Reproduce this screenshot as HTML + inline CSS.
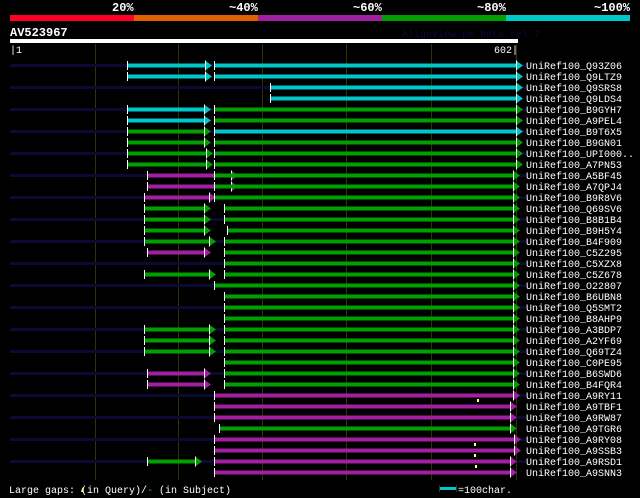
<!DOCTYPE html>
<html><head><meta charset="utf-8"><style>
html,body{margin:0;padding:0;background:#000;width:640px;height:498px;overflow:hidden}
svg{display:block}
text{font-family:"Liberation Mono","DejaVu Sans Mono",monospace;fill:#fff}
</style></head><body>
<svg id="s" width="640" height="498" xmlns="http://www.w3.org/2000/svg">
<rect width="640" height="498" fill="#000"/>
<g font-weight="bold" font-size="12">
<text x="112" y="11">20%</text>
<text x="229" y="11">~40%</text>
<text x="353" y="11">~60%</text>
<text x="477" y="11">~80%</text>
<text x="594" y="11">~100%</text>
</g>
<rect x="10" y="15" width="124" height="6" fill="#ff0022"/>
<rect x="134" y="15" width="124" height="6" fill="#e06000"/>
<rect x="258" y="15" width="124" height="6" fill="#a020a0"/>
<rect x="382" y="15" width="124" height="6" fill="#00a000"/>
<rect x="506" y="15" width="124" height="6" fill="#00c8c8"/>
<text x="10" y="36" font-weight="bold" font-size="12">AV523967</text>
<text x="402" y="37" font-size="10" style="fill:#0a0a40">AlignView.pm Beta rel.7</text>
<rect x="10" y="39" width="508" height="4" fill="#fff"/>
<g id="grid"></g>
<text x="10" y="53" font-size="10">|1</text>
<text x="518" y="53" font-size="10" text-anchor="end">602|</text>
<g id="rows"></g>
<g font-size="10" transform="translate(0,1)">
<text x="526" y="68">UniRef100_Q93Z06</text>
<text x="526" y="79">UniRef100_Q9LTZ9</text>
<text x="526" y="90">UniRef100_Q9SRS8</text>
<text x="526" y="101">UniRef100_Q9LDS4</text>
<text x="526" y="112">UniRef100_B9GYH7</text>
<text x="526" y="123">UniRef100_A9PEL4</text>
<text x="526" y="134">UniRef100_B9T6X5</text>
<text x="526" y="145">UniRef100_B9GN01</text>
<text x="526" y="156">UniRef100_UPI000..</text>
<text x="526" y="167">UniRef100_A7PN53</text>
<text x="526" y="178">UniRef100_A5BF45</text>
<text x="526" y="189">UniRef100_A7QPJ4</text>
<text x="526" y="200">UniRef100_B9R8V6</text>
<text x="526" y="211">UniRef100_Q69SV6</text>
<text x="526" y="222">UniRef100_B8B1B4</text>
<text x="526" y="233">UniRef100_B9H5Y4</text>
<text x="526" y="244">UniRef100_B4F909</text>
<text x="526" y="255">UniRef100_C5Z295</text>
<text x="526" y="266">UniRef100_C5XZX8</text>
<text x="526" y="277">UniRef100_C5Z678</text>
<text x="526" y="288">UniRef100_O22807</text>
<text x="526" y="299">UniRef100_B6UBN8</text>
<text x="526" y="310">UniRef100_Q5SMT2</text>
<text x="526" y="321">UniRef100_B8AHP9</text>
<text x="526" y="332">UniRef100_A3BDP7</text>
<text x="526" y="343">UniRef100_A2YF69</text>
<text x="526" y="354">UniRef100_Q69TZ4</text>
<text x="526" y="365">UniRef100_C0PE95</text>
<text x="526" y="376">UniRef100_B6SWD6</text>
<text x="526" y="387">UniRef100_B4FQR4</text>
<text x="526" y="398">UniRef100_A9RY11</text>
<text x="526" y="409">UniRef100_A9TBF1</text>
<text x="526" y="420">UniRef100_A9RW87</text>
<text x="526" y="431">UniRef100_A9TGR6</text>
<text x="526" y="442">UniRef100_A9RY08</text>
<text x="526" y="453">UniRef100_A9SSB3</text>
<text x="526" y="464">UniRef100_A9RSD1</text>
<text x="526" y="475">UniRef100_A9SNN3</text>
</g>
<text x="9" y="493" font-size="10">Large gaps: <tspan style="fill:#000"> </tspan>(in Query)/<tspan style="fill:#00c8c8">-</tspan> (in Subject)</text>
<path d="M81 492 l1.5 -5 l1.5 5 z" fill="#ffff80"/>
<rect x="439" y="487" width="17" height="3" fill="#00c8c8"/>
<rect x="439" y="485" width="1" height="7" fill="#333"/>
<rect x="456" y="485" width="1" height="7" fill="#333"/>
<text x="458" y="493" font-size="10">=100char.</text>
</svg>
<script>
var NS="http://www.w3.org/2000/svg";
function el(p,t,a){var e=document.createElementNS(NS,t);for(var k in a)e.setAttribute(k,a[k]);p.appendChild(e);return e;}
var g=document.getElementById('grid');
[95,178,262,346,431,516].forEach(function(x){el(g,'rect',{x:x,y:44,width:1,height:436,fill:'#333300'});});
var C='#00c8c8',G='#00a000',M='#a020a0';
var rows=[
[[127,205,C],[214,516,C]],
[[127,205,C],[214,516,C]],
[[270,516,C]],
[[270,516,C]],
[[127,204,C],[214,516,G]],
[[127,204,C],[214,516,G]],
[[127,204,G],[214,516,C]],
[[127,204,G],[214,516,G]],
[[127,206,G],[214,516,G]],
[[127,206,G],[214,516,G]],
[[147,214,M,1],[229,231,M],[214,513,G]],
[[147,214,M,1],[229,231,M],[214,513,G]],
[[144,209,M],[214,513,G]],
[[144,204,G],[224,513,G]],
[[144,204,G],[224,513,G]],
[[144,204,G],[227,513,G]],
[[144,209,G],[224,513,G]],
[[147,204,M],[224,513,G]],
[[224,513,G]],
[[144,209,G],[224,513,G]],
[[214,513,G]],
[[224,513,G]],
[[224,513,G]],
[[224,513,G]],
[[144,209,G],[224,513,G]],
[[144,209,G],[224,513,G]],
[[144,209,G],[224,513,G]],
[[224,513,G]],
[[147,204,M],[224,513,G]],
[[147,204,M],[224,513,G]],
[[214,513,M]],
[[214,510,M]],
[[214,510,M]],
[[219,510,G]],
[[214,514,M]],
[[214,514,M]],
[[147,195,G],[214,510,M]],
[[214,510,M]]
];
var yel={30:477,34:474,35:474,36:475};
var R=document.getElementById('rows');
rows.forEach(function(segs,i){
 var y=65+i*11;
 if(i%2==0) el(R,'rect',{x:10,y:y-1,width:516,height:3,fill:'#0a0a33'});
 segs.forEach(function(s){
  var a=s[0],b=s[1],c=s[2];
  if(b-a>4){
   el(R,'rect',{x:a,y:y-1.5,width:b-a,height:4,fill:c});
   el(R,'rect',{x:a,y:y-4,width:1,height:9,fill:'#fff'});
  }
  if(!s[3]){
   el(R,'path',{d:'M'+b+' '+(y-4.5)+' L'+(b+7)+' '+(y+0.5)+' L'+b+' '+(y+5.5)+' Z',fill:c});
   el(R,'rect',{x:b,y:y-4.5,width:1,height:10,fill:'#fff'});
  }
 });
 if(yel[i]) el(R,'rect',{x:yel[i],y:y+4,width:2,height:3,fill:'#ffff80'});
});
</script>
</body></html>
